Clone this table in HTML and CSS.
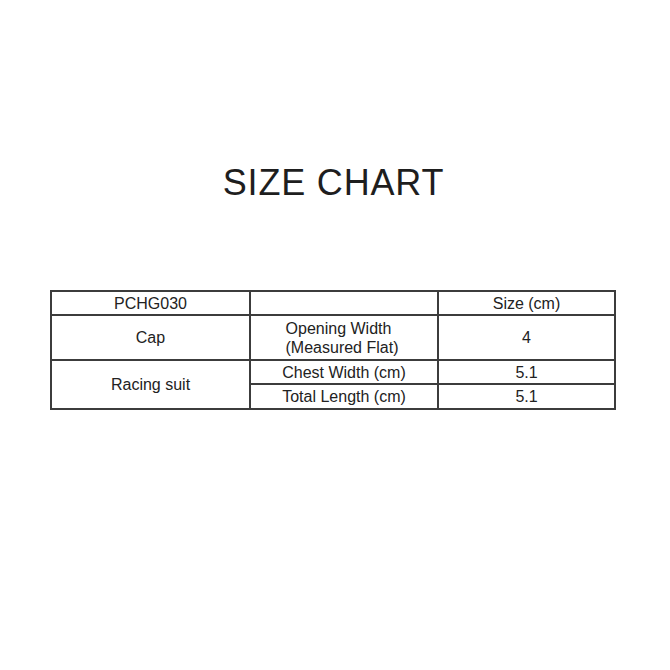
FILE: index.html
```html
<!DOCTYPE html>
<html>
<head>
<meta charset="utf-8">
<link rel="stylesheet" href="styles.css">
</head>
<body>
<div class="page">
  <h1 class="title">SIZE CHART</h1>
  <table class="chart">
    <colgroup>
      <col class="c1"><col class="c2"><col class="c3">
    </colgroup>
    <tr class="r1"><td>PCHG030</td><td></td><td>Size (cm)</td></tr>
    <tr class="r2"><td>Cap</td><td><span class="stack">Opening Width<br>(Measured Flat)</span></td><td>4</td></tr>
    <tr class="r3"><td rowspan="2">Racing suit</td><td>Chest Width (cm)</td><td>5.1</td></tr>
    <tr class="r4"><td>Total Length (cm)</td><td>5.1</td></tr>
  </table>
</div>
</body>
</html>
```

FILE: styles.css
```css
html, body {
  margin: 0;
  padding: 0;
  background: #ffffff;
}
.page {
  width: 670px;
  height: 670px;
  font-family: "Liberation Sans", Arial, sans-serif;
  color: #222222;
  padding-top: 165px;
  box-sizing: border-box;
}
.title {
  margin: 0;
  font-size: 36px;
  line-height: 36px;
  font-weight: normal;
  text-align: center;
  color: #1e1e1e;
  letter-spacing: 0.8px;
  padding-right: 3px;
}
.chart {
  margin: 89px 0 0 50px;
  border-collapse: collapse;
  table-layout: fixed;
  width: 564px;
  font-size: 16px;
}
.c1 { width: 199px; }
.c2 { width: 188px; }
.c3 { width: 177px; }
.chart td {
  border: 2px solid #3c3c3c;
  padding: 0;
  text-align: center;
  vertical-align: middle;
  line-height: 19px;
}
.stack {
  display: inline-block;
  text-align: left;
  margin-right: 4px;
}
.r1 td { height: 22px; }
.r2 td { height: 43px; }
.r3 td { height: 22px; }
.r4 td { height: 23px; }
```
